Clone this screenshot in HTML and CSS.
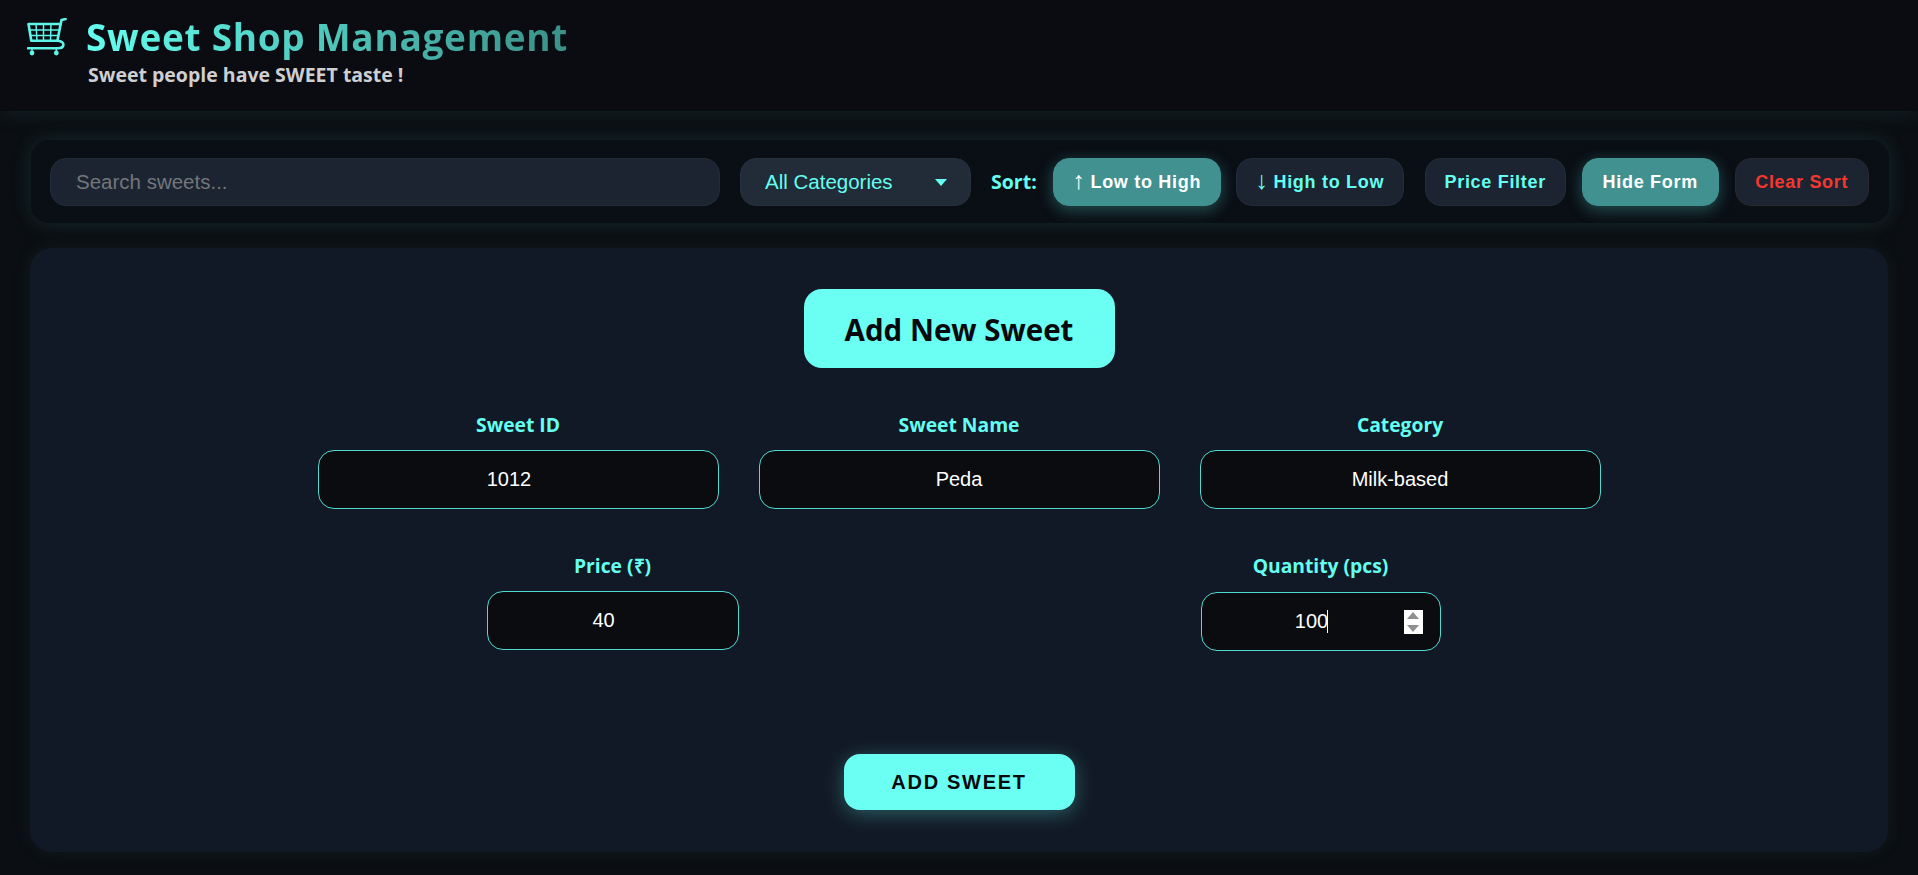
FILE: index.html

```html
<!DOCTYPE html>
<html lang="en">
<head>
    <meta charset="UTF-8">
    <title>Sweet Shop Management</title>
    <link rel="stylesheet" href="styles.css">
</head>
<body>
    <header class="top">
        <div class="brand">
            <svg class="cart" viewBox="0 0 40 38" fill="none" stroke="#5ff5e8" stroke-width="2.600" stroke-linecap="round" stroke-linejoin="round">
                <path d="M38.500 1 34.500 2 30.400 22.700H4.300L1.500 6H33.400"/>
                <path d="M30.400 22.700C33 23 36.500 24 36.400 26.600 36.300 29 34 30.200 31 30.200H1"/>
                <path stroke-width="1.500" d="M2 12H32M3 17.500H31M9 6 10 22.700M16.500 6V22.700M24 6 23.500 22.700"/>
                <circle cx="5" cy="35" r="2.400" fill="#5ff5e8" stroke="none"/>
                <circle cx="29.300" cy="35" r="2.400" fill="#5ff5e8" stroke="none"/>
                <path stroke-width="1.500" d="M5 31V34M29.300 31V34"/>
            </svg>
            <h1>Sweet Shop Management</h1>
        </div>
        <p class="tagline">Sweet people have SWEET taste !</p>
    </header>

    <div class="toolbar">
        <input class="search" type="text" placeholder="Search sweets...">
        <div class="select-wrap">
            <select class="category">
                <option>All Categories</option>
                <option>Milk-based</option>
            </select>
        </div>
        <span class="sort-label">Sort:</span>
        <button class="tool tool-active tool-sort"><span class="arrow">↑</span> Low to High</button>
        <button class="tool tool-sort"><span class="arrow">↓</span> High to Low</button>
        <button class="tool tool-filter">Price Filter</button>
        <button class="tool tool-active tool-hide">Hide Form</button>
        <button class="tool tool-clear">Clear Sort</button>
    </div>

    <main class="card">
        <h2 class="form-title">Add New Sweet</h2>
        <form class="sweet-form">
            <div class="row row-three">
                <label class="field">Sweet ID
                    <input class="num" type="number" value="1012">
                </label>
                <label class="field">Sweet Name
                    <input type="text" value="Peda">
                </label>
                <label class="field">Category
                    <input type="text" value="Milk-based">
                </label>
            </div>
            <div class="row row-two">
                <label class="field field-price">Price (₹)
                    <input class="num" type="number" value="40">
                </label>
                <label class="field field-qty">Quantity (pcs)
                    <span class="qty-wrap">
                        <input class="num" type="number" value="100">
                        <span class="caret"></span>
                        <span class="spinner">
                            <span class="spin-up"></span>
                            <span class="spin-down"></span>
                        </span>
                    </span>
                </label>
            </div>
            <button class="submit" type="button">ADD SWEET</button>
        </form>
    </main>
</body>
</html>
```

FILE: styles.css

```css
* {
    box-sizing: border-box;
}
html, body {
    height: 100%;
}
body {
    margin: 0;
    background-color: #0b0e12;
    font-family: "Liberation Sans", Arial, sans-serif;
    overflow: hidden;
}
.top {
    height: 111px;
    padding: 13px 27px 0;
    background-color: #0a0c11;
    box-shadow: 0 0 24px rgba(100, 255, 240, 0.1);
}
.brand {
    display: flex;
    align-items: center;
    gap: 19px;
}
.cart {
    width: 40px;
    height: 38px;
    flex: none;
}
h1 {
    margin: 0;
    font-family: "Open Sans", sans-serif;
    font-size: 37px;
    line-height: 48px;
    font-weight: 700;
    letter-spacing: 0.7px;
    background: linear-gradient(90deg, #64fff0, #3a9088);
    -webkit-background-clip: text;
    background-clip: text;
    color: transparent;
}
.tagline {
    margin: 1px 0 0 61px;
    font-family: "Open Sans", sans-serif;
    font-size: 19.500px;
    line-height: 26px;
    font-weight: 700;
    color: #cfcfd2;
}
.toolbar {
    display: flex;
    align-items: center;
    height: 83px;
    margin: 29px 29px 0 31px;
    padding: 0 20px 0 19px;
    background-color: #0a0e15;
    border-radius: 18px;
    box-shadow: 0 0 22px rgba(100, 255, 240, 0.12);
}
.search {
    width: 670px;
    height: 48px;
    padding: 0 25px;
    background-color: #1c2431;
    border: 1px solid #232d3a;
    border-radius: 16px;
    font: 20.500px "Liberation Sans", Arial, sans-serif;
    color: #fff;
    outline: none;
}
.search::placeholder {
    color: #73767c;
}
.select-wrap {
    position: relative;
    margin-left: 20px;
}
.select-wrap::after {
    content: "";
    position: absolute;
    top: 21px;
    right: 24px;
    border-left: 6px solid transparent;
    border-right: 6px solid transparent;
    border-top: 7px solid #64fff0;
}
.category {
    display: block;
    width: 231px;
    height: 48px;
    padding: 0 24px;
    appearance: none;
    background-color: #222b38;
    border: 1px solid #27303d;
    border-radius: 16px;
    font: 20.500px "Liberation Sans", Arial, sans-serif;
    color: #64fff0;
}
.sort-label {
    margin: 0 16px 0 20px;
    font-family: "Open Sans", sans-serif;
    font-size: 19.500px;
    font-weight: 700;
    color: #64fff0;
}
.tool {
    height: 48px;
    padding: 0;
    background-color: #1c2431;
    border: 1px solid #232d3a;
    border-radius: 16px;
    font: bold 18px "Liberation Sans", Arial, sans-serif;
    letter-spacing: 0.7px;
    color: #64fff0;
}
.tool-sort {
    width: 168px;
    margin-right: 15px;
}
.tool-active {
    background-color: #40918f;
    border-color: #40918f;
    color: #fff;
    box-shadow: 0 4px 16px rgba(100, 255, 240, 0.28);
}
.arrow {
    font-weight: normal;
    font-size: 25px;
    line-height: 20px;
    letter-spacing: 0;
    vertical-align: -1px;
}
.tool-filter {
    width: 141px;
    margin-left: 6px;
    padding-top: 1px;
}
.tool-hide {
    width: 137px;
    margin-left: 16px;
    padding-top: 1px;
}
.tool-clear {
    width: 134px;
    margin-left: 16px;
    padding-top: 1px;
    color: #f4372f;
    border-color: #2a2730;
}
.card {
    display: flex;
    flex-direction: column;
    align-items: center;
    height: 604px;
    margin: 25px 30px 0 30px;
    padding-top: 41px;
    background-color: #121926;
    border-radius: 22px;
    box-shadow: 0 0 22px rgba(100, 255, 240, 0.06);
}
.form-title {
    width: 311px;
    height: 79px;
    margin: 0;
    background-color: #6bfff3;
    border-radius: 18px;
    font-family: "Open Sans", sans-serif;
    font-size: 29.500px;
    line-height: 81px;
    font-weight: 700;
    text-align: center;
    color: #08090c;
}
.sweet-form {
    display: flex;
    flex-direction: column;
    align-items: center;
    width: 1283px;
    margin-top: 44px;
}
.row {
    display: flex;
    width: 100%;
}
.row-three {
    gap: 40px;
}
.row-two {
    margin-top: 44px;
    padding-left: 169px;
    gap: 462px;
}
.field {
    display: flex;
    flex-direction: column;
    align-items: center;
    gap: 12px;
    width: 401px;
    font-family: "Open Sans", sans-serif;
    font-size: 19.300px;
    line-height: 26px;
    font-weight: 700;
    color: #64fff0;
}
.field-price {
    width: 252px;
}
.field-qty {
    width: 240px;
    gap: 13px;
}
.field input {
    width: 100%;
    height: 59px;
    padding: 0 20px;
    background-color: #0a0c10;
    border: 1px solid #4fd9cf;
    border-radius: 16px;
    font: 20px "Liberation Sans", Arial, sans-serif;
    text-align: center;
    color: #fff;
    outline: none;
}
.field input.num {
    padding-right: 38px;
    appearance: textfield;
}
.num::-webkit-inner-spin-button {
    display: none;
}
.qty-wrap {
    position: relative;
    display: block;
    width: 100%;
}
.qty-wrap input {
    display: block;
}
.caret {
    position: absolute;
    top: 18px;
    left: 126px;
    width: 1px;
    height: 23px;
    background-color: #fff;
}
.spinner {
    position: absolute;
    top: 18px;
    right: 18px;
    display: flex;
    flex-direction: column;
    justify-content: space-between;
    align-items: center;
    width: 19px;
    height: 24px;
    padding: 2px 0;
    background-color: #fff;
}
.spin-up, .spin-down {
    width: 0;
    height: 0;
    border-left: 6px solid transparent;
    border-right: 6px solid transparent;
}
.spin-up {
    border-bottom: 7px solid #8f8f8f;
}
.spin-down {
    border-top: 7px solid #8f8f8f;
}
.submit {
    width: 231px;
    height: 56px;
    margin-top: 103px;
    background-color: #6bfff3;
    border: none;
    border-radius: 16px;
    box-shadow: 0 4px 20px rgba(100, 255, 240, 0.3);
    font: bold 20px "Liberation Sans", Arial, sans-serif;
    letter-spacing: 1.700px;
    color: #08090c;
}
```
